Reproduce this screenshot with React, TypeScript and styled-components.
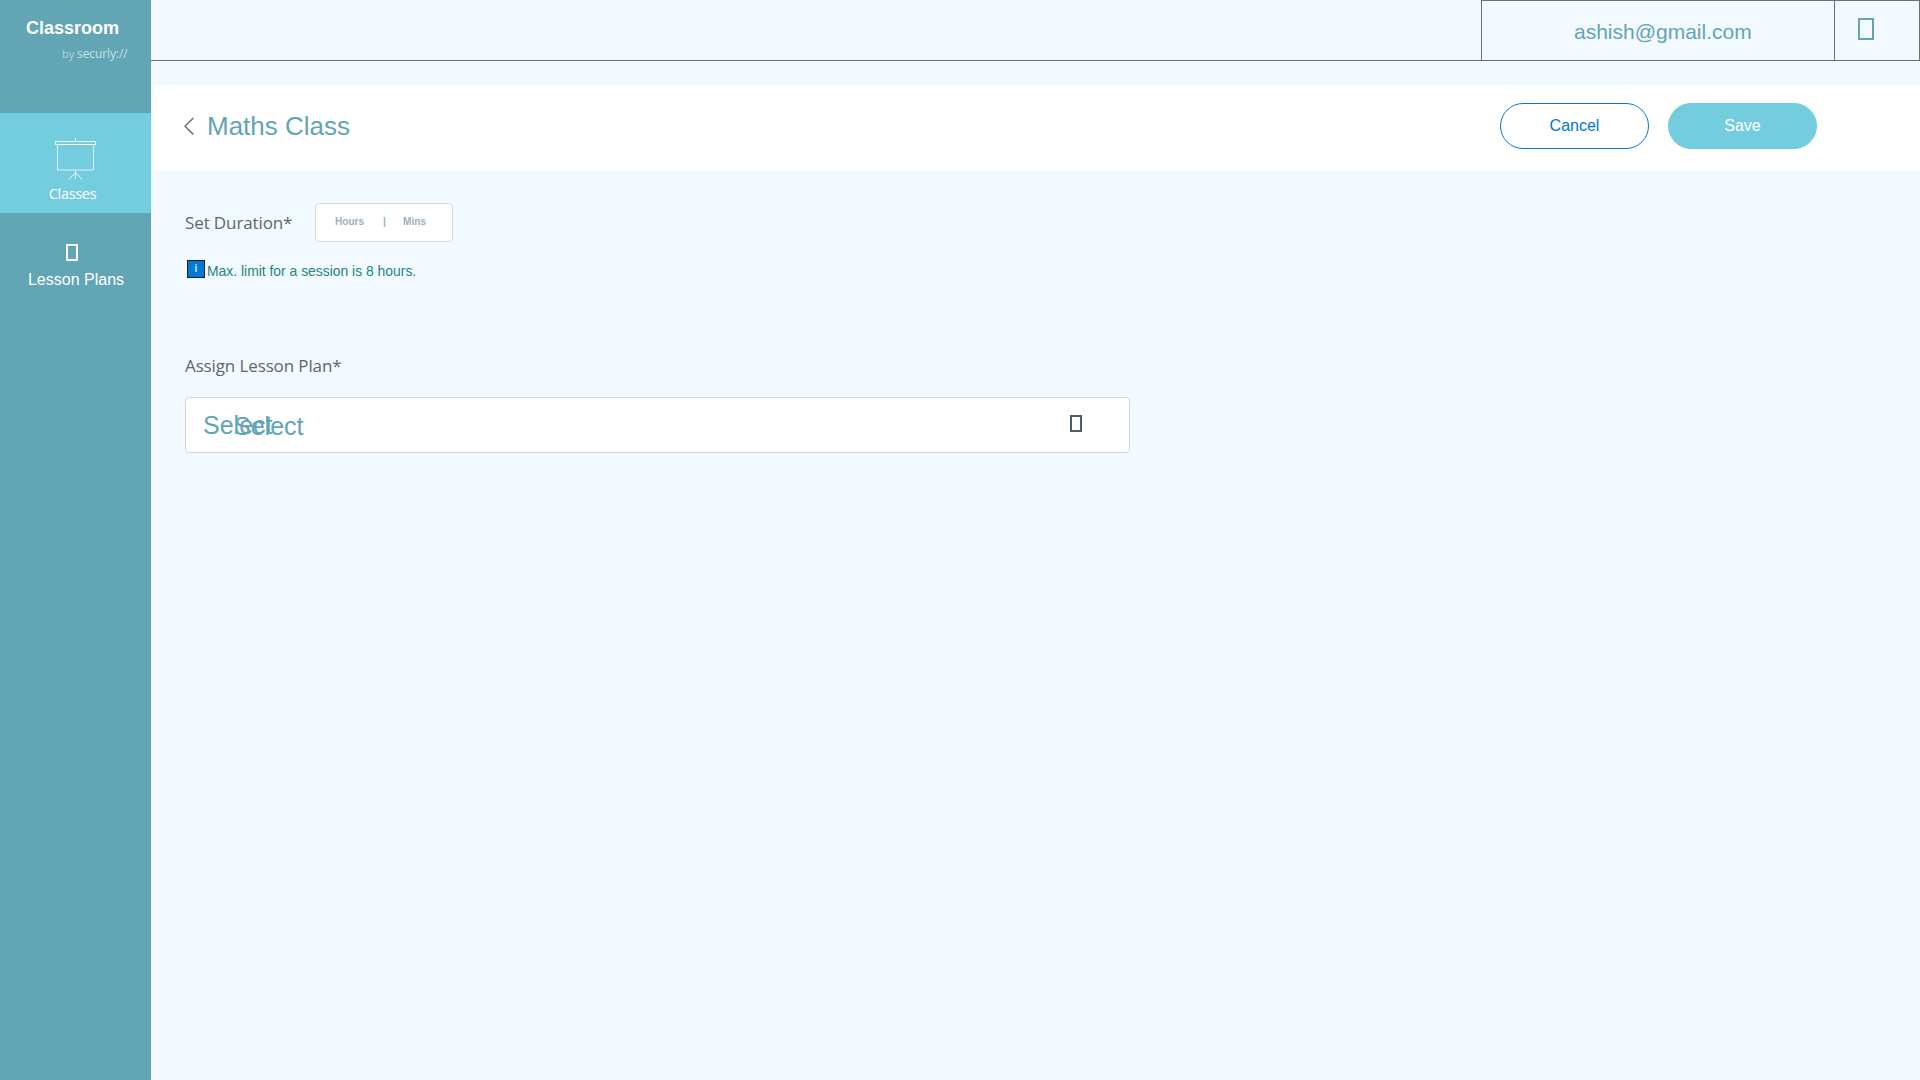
import React from "react";
import styled, { createGlobalStyle } from "styled-components";

const GlobalStyle = createGlobalStyle`
  * {
    box-sizing: border-box;
  }
  body {
    margin: 0;
    background: #f2f9ff;
    font-family: "Liberation Sans", Arial, sans-serif;
  }
`;

const Page = styled.div`
  display: flex;
  width: 1920px;
  height: 1080px;
  overflow: hidden;
`;

const Sidebar = styled.nav`
  width: 151px;
  flex-shrink: 0;
  background: #62a5b5;
  color: #fff;
`;

const Brand = styled.div`
  height: 113px;
  padding: 18px 0 0 26px;
`;

const BrandName = styled.div`
  font-size: 18px;
  font-weight: bold;
  line-height: 20px;
`;

const BrandBy = styled.div`
  padding: 7px 0 0 36px;
  font-family: "Open Sans", sans-serif;
  font-size: 12px;
  line-height: 18px;
  letter-spacing: -0.1px;
  white-space: nowrap;
  color: #c9e0e6;

  small {
    font-size: 11px;
    color: #b4d4dc;
  }
`;

const NavItem = styled.div<{ $active?: boolean }>`
  display: flex;
  flex-direction: column;
  align-items: center;
  height: 100px;
  background: ${(props) => (props.$active ? "#73cddf" : "transparent")};
`;

const ScreenIcon = styled.svg`
  width: 43px;
  height: 43px;
  margin: 25px 1px 0 0;
`;

const ClassesLabel = styled.span`
  margin: 3px 6px 0 0;
  font-family: "Open Sans", sans-serif;
  font-size: 14.5px;
  line-height: 20px;
  letter-spacing: -0.3px;
`;

const PlansLabel = styled.span`
  margin: 10px 0 0 1px;
  font-size: 16px;
  line-height: 18px;
`;

const Glyph = styled.span<{ $w: number; $h: number; $color: string }>`
  display: block;
  flex-shrink: 0;
  width: ${(props) => props.$w}px;
  height: ${(props) => props.$h}px;
  border: 2px solid ${(props) => props.$color};
`;

const PlansGlyph = styled(Glyph)`
  margin: 31px 7px 0 0;
`;

const Main = styled.main`
  flex: 1;
`;

const TopBar = styled.header`
  display: flex;
  justify-content: flex-end;
  height: 61px;
  border-bottom: 1px solid #707070;
`;

const Account = styled.div`
  width: 354px;
  padding: 19px 0 0 92px;
  border: 1px solid #707070;
  border-bottom: 0;
  color: #62a5b5;
  font-size: 21px;
  line-height: 24px;
`;

const UserMenu = styled.div`
  width: 85px;
  padding: 17px 0 0 23px;
  border: 1px solid #707070;
  border-width: 1px 1px 0 0;
`;

const TitleBar = styled.section`
  display: flex;
  align-items: center;
  height: 86px;
  margin: 24px 0 0 1px;
  padding: 0 103px 0 32px;
  background: #fff;
`;

const BackIcon = styled.svg`
  width: 10px;
  height: 18px;
  margin-top: -5px;
`;

const Title = styled.h1`
  flex: 1;
  margin: -5px 0 0 13px;
  color: #62a5b5;
  font-size: 26px;
  font-weight: normal;
  line-height: 30px;
`;

const Button = styled.button<{ $primary?: boolean }>`
  width: 149px;
  height: 46px;
  margin: -4px 0 0 19px;
  padding: 0;
  border: 1px solid ${(props) => (props.$primary ? "#73cddf" : "#0078d4")};
  border-radius: 23px;
  background: ${(props) => (props.$primary ? "#73cddf" : "#fff")};
  color: ${(props) => (props.$primary ? "#fff" : "#0078d4")};
  font: 16px "Liberation Sans", Arial, sans-serif;
`;

const Form = styled.section`
  padding: 32px 0 0 34px;
`;

const Row = styled.div`
  display: flex;
`;

const Label = styled.label`
  display: block;
  font-family: "Open Sans", sans-serif;
  font-size: 17px;
  font-weight: 400;
  line-height: 24px;
  letter-spacing: -0.12px;
  color: #5a6870;
`;

const DurationLabel = styled(Label)`
  width: 130px;
  padding-top: 8px;
`;

const DurationBox = styled.div`
  display: flex;
  width: 138px;
  height: 39px;
  padding: 12px 0 0 19px;
  border: 1px solid #d5d9dd;
  border-radius: 4px;
  background: #fff;
  color: #9cb1b9;
  font-size: 10.1px;
  font-weight: bold;
  line-height: 12px;

  span {
    width: 48px;
  }
  i {
    width: 20px;
    font-style: normal;
  }
`;

const Hint = styled.div`
  display: flex;
  height: 22px;
  margin: 18px 0 0 2px;
  color: #23857e;
  font-size: 13.9px;
  line-height: 23px;
`;

const InfoBadge = styled.span`
  width: 18px;
  height: 18px;
  margin-right: 2px;
  border: 1px solid #10222f;
  background: #0078d7;
  color: #d5e8f8;
  font-size: 10px;
  font-weight: bold;
  line-height: 16px;
  text-align: center;
`;

const PlanLabel = styled(Label)`
  margin-top: 72px;
`;

const Select = styled.div`
  display: flex;
  width: 945px;
  height: 56px;
  margin-top: 19px;
  padding: 12px 47px 0 17px;
  border: 1px solid #d0d5da;
  border-radius: 4px;
  background: #fff;
  color: #62a5b5;
  font-size: 25px;
  line-height: 30px;
`;

const SelectValue = styled.div`
  position: relative;
  flex: 1;
`;

const Placeholder = styled.span`
  position: absolute;
  left: 31px;
  top: 1px;
`;

const ArrowGlyph = styled(Glyph)`
  margin-top: 5px;
`;

export default function App() {
  return (
    <Page>
      <GlobalStyle />
      <Sidebar>
        <Brand>
          <BrandName>Classroom</BrandName>
          <BrandBy>
            <small>by</small> securly://
          </BrandBy>
        </Brand>
        <NavItem $active>
          <ScreenIcon viewBox="0 0 43 43" fill="none" stroke="#fff">
            <path d="M21.5 0v3M1.5 3.5h40v3h-40z" />
            <path d="M3.5 6.5v25.5h36v-25.5" strokeOpacity="0.75" />
            <path d="M21.5 32v9M21.5 34.5l-6.5 7M21.5 34.5l6.5 7" strokeOpacity="0.85" />
          </ScreenIcon>
          <ClassesLabel>Classes</ClassesLabel>
        </NavItem>
        <NavItem>
          <PlansGlyph $w={12} $h={17} $color="#fff" />
          <PlansLabel>Lesson Plans</PlansLabel>
        </NavItem>
      </Sidebar>
      <Main>
        <TopBar>
          <Account>ashish@gmail.com</Account>
          <UserMenu>
            <Glyph $w={16} $h={22} $color="#62a5b5" />
          </UserMenu>
        </TopBar>
        <TitleBar>
          <BackIcon viewBox="0 0 10 18" fill="none" stroke="#707070" strokeWidth="1.5">
            <path d="M9.3 1L1 9.2l8.3 8.2" />
          </BackIcon>
          <Title>Maths Class</Title>
          <Button>Cancel</Button>
          <Button $primary>Save</Button>
        </TitleBar>
        <Form>
          <Row>
            <DurationLabel>Set Duration*</DurationLabel>
            <DurationBox>
              <span>Hours</span>
              <i>|</i>
              <span>Mins</span>
            </DurationBox>
          </Row>
          <Hint>
            <InfoBadge>i</InfoBadge>
            Max. limit for a session is 8 hours.
          </Hint>
          <PlanLabel>Assign Lesson Plan*</PlanLabel>
          <Select>
            <SelectValue>
              Select
              <Placeholder>Select</Placeholder>
            </SelectValue>
            <ArrowGlyph $w={12} $h={17} $color="#4d5f6b" />
          </Select>
        </Form>
      </Main>
    </Page>
  );
}
